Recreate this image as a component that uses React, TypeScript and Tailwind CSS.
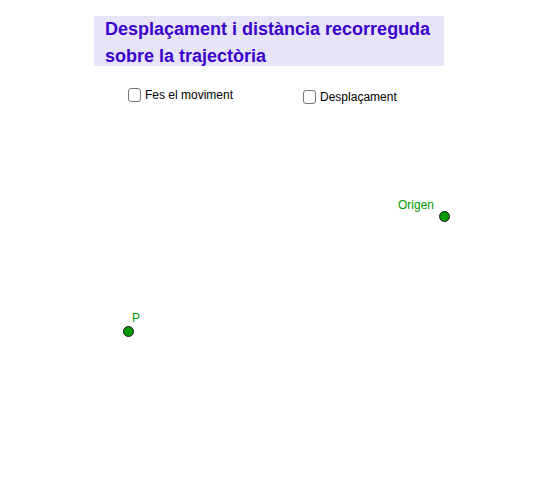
import React from "react";

function Checkbox({ label, className }: { label: string; className?: string }) {
  return (
    <label className={"flex items-center gap-[4px] " + (className ?? "")}>
      <span className="block w-[13px] h-[14px] rounded-[3px] border border-[#767676] bg-white" />
      <span className="text-[12px] leading-[14px] text-black">{label}</span>
    </label>
  );
}

function Point({ x, y }: { x: number; y: number }) {
  return (
    <div
      className="absolute w-[11px] h-[11px] rounded-full bg-[#009900] border border-[#1a1a1a]"
      style={{ left: x - 5.5, top: y - 5.5 }}
    />
  );
}

export default function App() {
  return (
    <div
      className="relative w-[544px] h-[481px] bg-white overflow-hidden"
      style={{ fontFamily: '"Liberation Sans", Arial, sans-serif' }}
    >
      <div className="ml-[94px] mt-[16px] w-[350px] h-[50px] bg-[#e8e4f8] pl-[11px]">
        <h1 className="text-[18px] leading-[27px] font-bold text-[#3a00cc]">
          Desplaçament i distància recorreguda
          <br />
          sobre la trajectòria
        </h1>
      </div>
      <div className="flex items-start mt-[22px]">
        <Checkbox label="Fes el moviment" className="ml-[128px]" />
        <Checkbox label="Desplaçament" className="ml-[70px] mt-[2px]" />
      </div>
      <div className="absolute left-[398px] top-[198px] text-[12px] leading-[14px] text-[#009900]">Origen</div>
      <Point x={444} y={216} />
      <div className="absolute left-[132px] top-[311px] text-[12px] leading-[14px] text-[#009900]">P</div>
      <Point x={128} y={331} />
    </div>
  );
}
